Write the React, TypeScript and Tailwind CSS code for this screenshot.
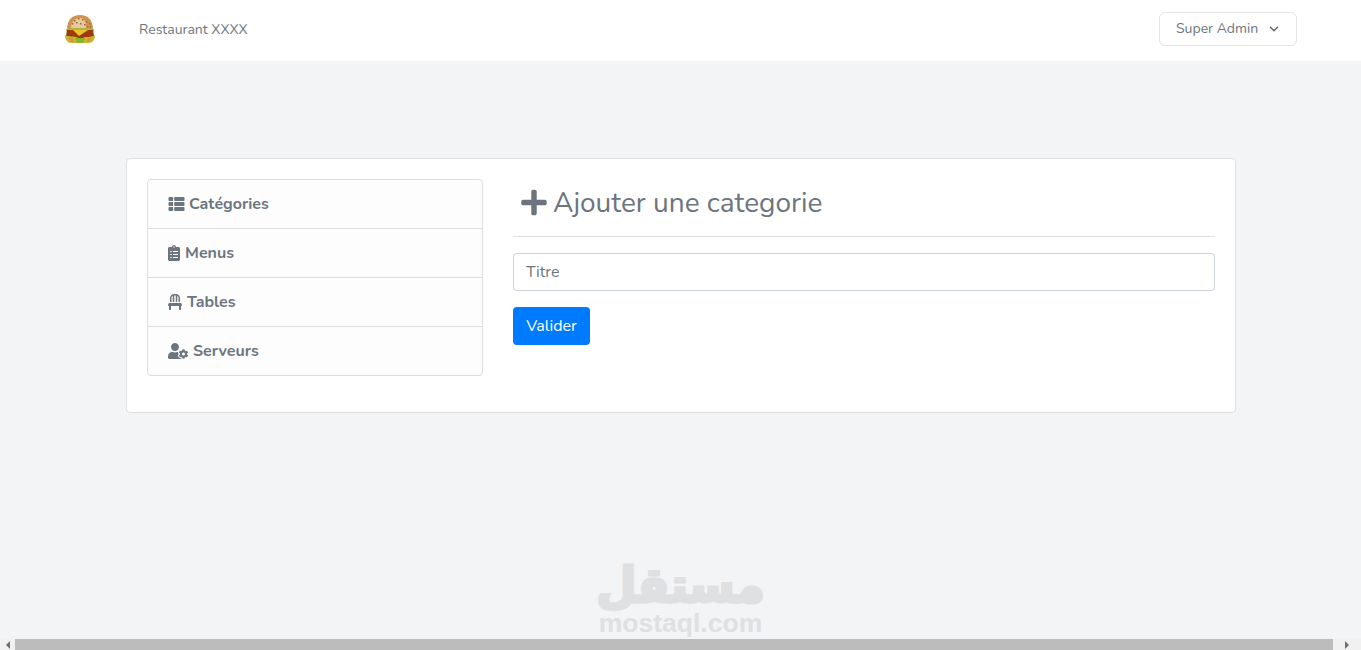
import React from "react";
import { FaThList, FaClipboardList, FaChair, FaUserCog, FaPlus } from "react-icons/fa";
import { ChevronDown } from "lucide-react";

const items = [
  { label: "Catégories", icon: <FaThList className="h-[16px] w-[17px]" />, gap: "gap-[4px]" },
  { label: "Menus", icon: <FaClipboardList className="h-[16px] w-[12px]" />, gap: "gap-[5px]" },
  { label: "Tables", icon: <FaChair className="h-[16px] w-[14px]" />, gap: "gap-[5px]" },
  { label: "Serveurs", icon: <FaUserCog className="h-[16px] w-[20px]" />, gap: "gap-[5px]" },
];

const crumbs = [
  [9, 6], [13, 4], [17, 5], [21, 7], [24, 9], [7, 9], [11, 8], [15, 9], [19, 10], [22, 12], [25, 12],
];

function Burger() {
  return (
    <svg viewBox="0 0 30 30" className="h-[30px] w-[30px]">
      <path d="M2 16C2 6 7 1 15 1s13 5 13 15z" fill="#cf9350" />
      <path d="M6 14c0-6 4-10 9-10 4 0 6 3 6 10z" fill="#e6c9a0" />
      {crumbs.map(([x, y]) => (
        <rect key={`${x}-${y}`} x={x} y={y} width="1.5" height="1.5" fill="#9c6a34" />
      ))}
      <path d="M1 15c5-1 23-1 28 0l-1 4H2z" fill="#a8c02e" />
      <path d="M2 16h26l1 6c-4 3-24 3-28 0z" fill="#9c3c0c" />
      <path d="M8 16h15l-9 6z" fill="#eec52f" />
      <path d="M0 21c4 2 8 1 11 2l4 2 5-2c4 0 7 0 10-2 0 4-2 8-6 8H6c-4 0-6-4-6-8z" fill="#c8b62c" />
      <path d="M10 24h10l-2 5h-6z" fill="#8cb32c" />
      <path d="M4 24h4l1 4H5zM23 24h3l-1 4h-3z" fill="#d8953f" />
    </svg>
  );
}

export default function App() {
  return (
    <div className="relative flex h-screen flex-col overflow-hidden bg-[#f3f4f6] font-['Nunito','Lato','Open_Sans',sans-serif] text-[#6c757d]">
      <header className="flex h-[61px] shrink-0 items-center bg-white pb-[3px] pl-[65px] pr-[64px]">
        <Burger />
        <span className="ml-[44px] text-[14px] text-[#6f767d]">Restaurant XXXX</span>
        <button className="ml-auto flex h-[34px] w-[138px] items-center rounded-[6px] border border-[#e4e4e4] bg-white pb-[1px] pl-[16px] text-[14px] text-[#6c757d]">
          Super Admin
          <ChevronDown className="ml-[9px] h-[14px] w-[14px] text-[#5f666d]" strokeWidth={2.5} />
        </button>
      </header>

      <main className="flex flex-1 items-start justify-center pl-[1px] pt-[97px]">
        <div className="flex h-[255px] w-[1110px] gap-[30px] rounded-[4px] border border-[#dfdfdf] bg-white p-[20px]">
          <ul className="h-[197px] w-[336px] shrink-0 overflow-hidden rounded-[4px] border border-[#dedede] bg-[#fdfdfd]">
            {items.map((item) => (
              <li
                key={item.label}
                className={`flex h-[49px] items-center border-b border-[#dedede] pl-[20px] text-[16px] font-bold text-[#6c757d] last:h-[48px] last:border-b-0 ${item.gap}`}
              >
                {item.icon}
                {item.label}
              </li>
            ))}
          </ul>

          <section className="min-w-0 flex-1">
            <div className="flex h-[58px] items-center gap-[6px] border-b border-[#dedede] pb-[10px] pl-[8px]">
              <FaPlus className="h-[29px] w-[26px] text-[#6c757d]" />
              <h1 className="text-[28px] leading-none text-[#6c757d]">Ajouter une categorie</h1>
            </div>
            <input
              placeholder="Titre"
              className="mt-[16px] block h-[38px] w-full rounded-[4px] border border-[#ced4da] bg-white px-[12px] text-[16px] placeholder:text-[#6c757d]"
            />
            <button className="mt-[16px] h-[38px] w-[77px] rounded-[4px] bg-[#007bff] text-[16px] text-white">
              Valider
            </button>
          </section>
        </div>
      </main>

      {/* watermark */}
      <div className="pointer-events-none absolute bottom-[14px] left-[598px] flex w-[165px] flex-col items-center text-[#dfe0e2]">
        <span className="mb-[2px] origin-bottom scale-y-[1.05] font-['DejaVu_Sans',sans-serif] text-[46px] font-bold leading-[46px] [-webkit-text-stroke:3px_#dfe0e2]" dir="rtl">مستقل</span>
        <span className="font-['Liberation_Sans',sans-serif] text-[26.5px] font-bold leading-[25px]">mostaql.com</span>
      </div>

      {/* horizontal scrollbar */}
      <div className="flex h-[11px] shrink-0 items-center bg-[#f1f1f1]">
        <div className="flex w-[15px] justify-center">
          <div className="h-0 w-0 border-y-[4px] border-r-[4px] border-y-transparent border-r-[#6e6e6e]" />
        </div>
        <div className="h-full w-[1318px] bg-[#bcbcbc]" />
        <div className="flex flex-1 justify-center">
          <div className="h-0 w-0 border-y-[4px] border-l-[4px] border-y-transparent border-l-[#6e6e6e]" />
        </div>
      </div>
    </div>
  );
}
